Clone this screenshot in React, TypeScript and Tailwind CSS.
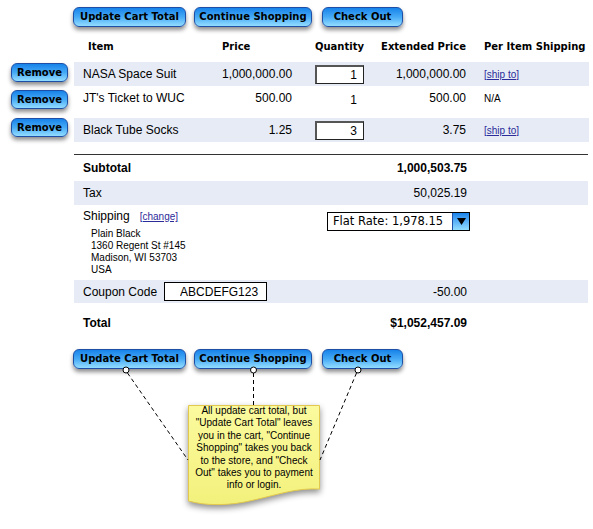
import React from "react";

const btn =
  "block rounded-[6px] border border-[#1d4fa6] bg-linear-to-b from-[#1583ea] via-[#45aaf5] to-[#92ddff] shadow-[0_3px_4px_rgba(0,0,0,0.45)] font-['DejaVu_Sans',Verdana,sans-serif] text-[10px] font-bold text-black text-center";

const shaded = "bg-[#e6ebf5]";

function ActionButtons() {
  return (
    <div className="flex pl-[73px]">
      <button className={`${btn} h-[20px] leading-[18px] w-[113px]`}>Update Cart Total</button>
      <button className={`${btn} h-[20px] leading-[18px] w-[118px] ml-[8px]`}>Continue Shopping</button>
      <button className={`${btn} h-[20px] leading-[18px] w-[81px] ml-[10px]`}>Check Out</button>
    </div>
  );
}

interface ItemRowProps {
  name: string;
  price: string;
  qty: string;
  editable: boolean;
  ext: string;
  shipTo: boolean;
  bg: boolean;
  tall?: boolean;
  removeTop: string;
}

function ShipLink({ children }: { children: React.ReactNode }) {
  return <a className="text-[10px] text-[#2b2b9a] underline cursor-pointer">{children}</a>;
}

function ItemRow({ name, price, qty, editable, ext, shipTo, bg, tall, removeTop }: ItemRowProps) {
  return (
    <div className="flex items-start pl-[11px]">
      <div className="w-[63px] shrink-0">
        <button className={`${btn} w-[57px] h-[19px] leading-[17px] ${removeTop}`}>Remove</button>
      </div>
      <div
        className={`flex w-[515px] text-[12px] ${bg ? shaded : ""} ${
          tall ? "h-[32px] items-start pt-[5px] leading-[15px]" : "h-[24px] items-center leading-[15px]"
        }`}
      >
        <div className="w-[148px] pl-[9px]">{name}</div>
        <div className="w-[85px] pr-[15px] text-right">{price}</div>
        <div className="w-[67px] pl-[8px]">
          {editable ? (
            <input
              readOnly
              value={qty}
              className="block w-[49px] h-[19px] bg-white border border-[#222] border-t-2 border-l-2 border-t-[#555] border-l-[#555] text-right pr-[6px] text-[12px] outline-none"
            />
          ) : (
            <div className="w-[49px] text-right pr-[7px] pt-[2px]">{qty}</div>
          )}
        </div>
        <div className="w-[100px] pr-[8px] text-right">{ext}</div>
        <div className="w-[115px] pl-[10px] text-[10px]">
          {shipTo ? <ShipLink>[ship to]</ShipLink> : "N/A"}
        </div>
      </div>
    </div>
  );
}

function Note() {
  return (
    <div className="relative ml-[188px] mt-[36px] w-[132px] h-[104px]">
      <svg
        className="absolute left-0 top-0 drop-shadow-[0_3px_3px_rgba(0,0,0,0.45)]"
        width="132"
        height="104"
        viewBox="0 0 132 104"
      >
        <defs>
          <linearGradient id="noteFill" x1="0" y1="0" x2="0" y2="1">
            <stop offset="0" stopColor="#fbfa9e" />
            <stop offset="1" stopColor="#f3f17c" />
          </linearGradient>
        </defs>
        <path
          d="M0.5,0.5 H131.5 V84 C108,83 92,89 66,95 C42,101 18,101 0.5,96 Z"
          fill="url(#noteFill)"
          stroke="#e2c84c"
          strokeWidth="1"
        />
      </svg>
      <p className="relative text-center text-[10px] leading-[12.4px] text-black whitespace-nowrap">
        All update cart total, but
        <br />
        "Update Cart Total" leaves
        <br />
        you in the cart, "Continue
        <br />
        Shopping" takes you back
        <br />
        to the store, and "Check
        <br />
        Out" takes you to payment
        <br />
        info or login.
      </p>
    </div>
  );
}

export default function App() {
  return (
    <div className="relative w-[593px] h-[529px] bg-white text-black font-['Liberation_Sans',Arial,sans-serif] overflow-hidden">
      <div className="pt-[7px]">
        <ActionButtons />
      </div>

      {/* column headings */}
      <div className="mt-[12px] ml-[74px] flex h-[16px] leading-[16px] font-['DejaVu_Sans',Verdana,sans-serif] text-[10px] font-bold">
        <div className="w-[148px] pl-[14px]">Item</div>
        <div className="w-[85px]">Price</div>
        <div className="w-[67px] pl-[8px]">Quantity</div>
        <div className="w-[100px] pr-[8px] text-right">Extended Price</div>
        <div className="w-[115px] pl-[10px] whitespace-nowrap">Per Item Shipping</div>
      </div>

      <div className="mt-[7px]">
        <ItemRow name="NASA Space Suit" price="1,000,000.00" qty="1" editable ext="1,000,000.00" shipTo bg removeTop="mt-[1px]" />
        <ItemRow name="JT's Ticket to WUC" price="500.00" qty="1" editable={false} ext="500.00" shipTo={false} bg={false} tall removeTop="mt-[4px]" />
        <ItemRow name="Black Tube Socks" price="1.25" qty="3" editable ext="3.75" shipTo bg removeTop="mt-0" />
      </div>

      {/* totals */}
      <div className="ml-[74px] mt-[12px] w-[514px] border-t border-[#333] text-[12px]">
        <div className="flex h-[26px] items-center font-bold">
          <div className="flex-1 pl-[9px]">Subtotal</div>
          <div className="pr-[121px]">1,000,503.75</div>
        </div>
        <div className={`flex h-[24px] items-center ${shaded}`}>
          <div className="flex-1 pl-[9px]">Tax</div>
          <div className="pr-[121px]">50,025.19</div>
        </div>
        <div className="flex h-[75px]">
          <div className="w-[253px] pl-[9px] pt-[4px]">
            <div className="flex items-baseline leading-[15px]">
              <span>Shipping</span>
              <span className="ml-[10px]">
                <ShipLink>[change]</ShipLink>
              </span>
            </div>
            <div className="mt-[4px] pl-[8px] text-[10px] leading-[12px]">
              <div>Plain Black</div>
              <div>1360 Regent St #145</div>
              <div>Madison, WI 53703</div>
              <div>USA</div>
            </div>
          </div>
          <div className="mt-[7px] flex w-[143px] h-[19px] border border-black bg-white">
            <div className="flex-1 pl-[5px] font-['DejaVu_Sans',Verdana,sans-serif] text-[11.5px] leading-[17px] whitespace-nowrap">
              Flat Rate: 1,978.15
            </div>
            <div className="w-[17px] flex items-center justify-center border-l border-[#1d4fa6] bg-linear-to-b from-[#1583ea] to-[#92ddff]">
              <svg width="9" height="7" viewBox="0 0 9 7">
                <polygon points="0,0 9,0 4.5,7" fill="#000" />
              </svg>
            </div>
          </div>
        </div>
        <div className={`flex h-[23px] items-center ${shaded}`}>
          <div className="pl-[9px]">Coupon Code</div>
          <input
            readOnly
            value="ABCDEFG123"
            className="ml-[7px] w-[103px] h-[19px] border border-black bg-white pl-[15px] text-[12px] outline-none"
          />
          <div className="flex-1 text-right pr-[121px]">-50.00</div>
        </div>
        <div className="flex h-[40px] items-center font-bold">
          <div className="flex-1 pl-[9px]">Total</div>
          <div className="pr-[121px]">$1,052,457.09</div>
        </div>
      </div>

      <div className="mt-[6px]">
        <ActionButtons />
      </div>

      <Note />

      {/* callout connectors */}
      <svg className="absolute left-0 top-0 pointer-events-none" width="593" height="529">
        <g stroke="#000" strokeWidth="1" fill="none" strokeDasharray="4 3">
          <line x1="127.5" y1="373" x2="188" y2="460" />
          <line x1="253.5" y1="373" x2="253.5" y2="405" />
          <line x1="356.5" y1="373" x2="320" y2="460" />
        </g>
        <g stroke="#000" strokeWidth="1" fill="#fff">
          <circle cx="126" cy="370" r="3" />
          <circle cx="253.5" cy="370" r="3" />
          <circle cx="358" cy="370" r="3" />
        </g>
      </svg>
    </div>
  );
}
